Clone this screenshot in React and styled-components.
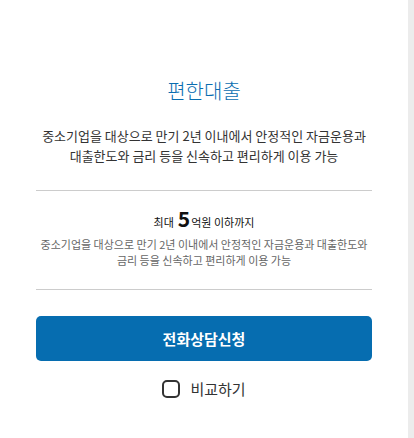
import styled, { createGlobalStyle } from "styled-components";

const GlobalStyle = createGlobalStyle`
  html, body {
    margin: 0;
    padding: 0;
    background: #fff;
  }
  body {
    font-family: "Noto Sans CJK KR", "Noto Sans", sans-serif;
    color: #333;
  }
`;

const Page = styled.div`
  display: flex;
  width: 414px;
  height: 438px;
  overflow: hidden;
`;

const Panel = styled.div`
  flex: 1;
  padding: 0 36px;
  display: flex;
  flex-direction: column;
  align-items: stretch;
`;

const ScrollTrack = styled.div`
  width: 6px;
  background: #ececec;
`;

const Title = styled.h1`
  margin: 76px 0 0;
  font-size: 20px;
  font-weight: 300;
  line-height: 30px;
  color: #0a6db0;
  text-align: center;
`;

const Lead = styled.p`
  margin: 20px 0 0;
  font-size: 13px;
  line-height: 20px;
  color: #333;
  text-align: center;
`;

const Divider = styled.hr`
  margin: ${({ $top }) => $top}px 0 0;
  border: none;
  border-top: 1px solid #ccc;
`;

const Limit = styled.div`
  margin-top: 17px;
  display: flex;
  justify-content: center;
  align-items: baseline;
  font-size: 11px;
  color: #111;
`;

const Amount = styled.strong`
  font-size: 21px;
  font-weight: 700;
  margin: 0 1px 0 4px;
  line-height: 20px;
`;

const Note = styled.p`
  margin: 6px 0 0;
  font-size: 11px;
  line-height: 16px;
  color: #666;
  text-align: center;
`;

const CallButton = styled.button`
  margin-top: 26px;
  height: 45px;
  border: none;
  border-radius: 5px;
  background: #066db0;
  color: #fff;
  font-family: inherit;
  font-size: 15px;
  font-weight: 700;
  cursor: pointer;
`;

const Compare = styled.label`
  margin-top: 17px;
  display: flex;
  justify-content: center;
  align-items: center;
  gap: 10px;
  font-size: 15px;
  color: #333;
  cursor: pointer;
`;

const Box = styled.span`
  width: 14px;
  height: 14px;
  border: 2px solid #333;
  border-radius: 5px;
`;

export default function App() {
  return (
    <>
      <GlobalStyle />
      <Page>
        <Panel>
          <Title>편한대출</Title>
          <Lead>
            중소기업을 대상으로 만기 2년 이내에서 안정적인 자금운용과
            <br />
            대출한도와 금리 등을 신속하고 편리하게 이용 가능
          </Lead>
          <Divider $top={24} />
          <Limit>
            최대 <Amount>5</Amount>억원 이하까지
          </Limit>
          <Note>
            중소기업을 대상으로 만기 2년 이내에서 안정적인 자금운용과 대출한도와
            <br />
            금리 등을 신속하고 편리하게 이용 가능
          </Note>
          <Divider $top={21} />
          <CallButton>전화상담신청</CallButton>
          <Compare>
            <Box />
            비교하기
          </Compare>
        </Panel>
        <ScrollTrack />
      </Page>
    </>
  );
}
